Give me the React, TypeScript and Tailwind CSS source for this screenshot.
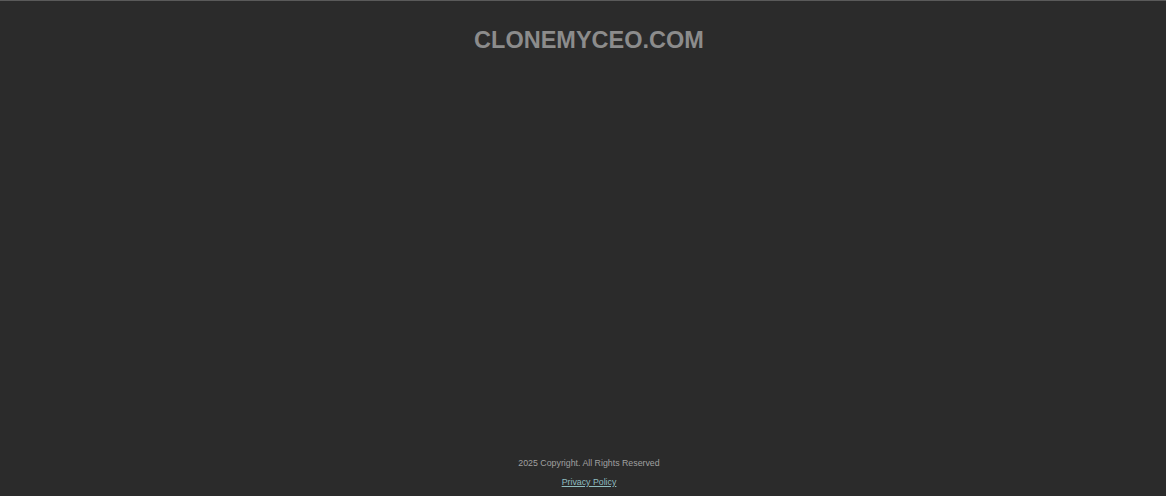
export default function App() {
  return (
    <main className="flex h-screen flex-col border-t border-[#5a5a5a] bg-[#2b2b2b] pl-[12px] font-['Liberation_Sans',Arial,sans-serif]">
      {/* Header */}
      <header className="pt-[26px] text-center">
        <h1 className="text-[23.5px] font-bold leading-[27px] text-[#8c8c8c]">
          CLONEMYCEO.COM
        </h1>
      </header>

      <div className="flex-1" />

      {/* Footer */}
      <footer className="pb-[4px] text-center text-[8.8px] leading-[19px]">
        <p className="text-[#a0a0a0]">2025 Copyright. All Rights Reserved</p>
        <a href="#" className="text-[#8fbcc0] underline">
          Privacy Policy
        </a>
      </footer>
    </main>
  );
}
